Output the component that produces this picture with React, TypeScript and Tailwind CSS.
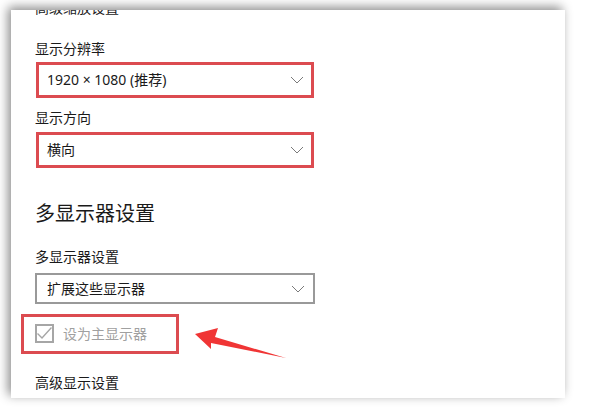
import React from 'react';

const font = { fontFamily: '"Noto Sans", "Noto Sans CJK SC", sans-serif' };

const Chevron = () => (
    <svg width="14" height="8" viewBox="0 0 14 8" fill="none" className="shrink-0">
        <path d="M1 1l6 6 6-6" stroke="#7a7a7a" strokeWidth="1" />
    </svg>
);

const Dropdown: React.FC<{ value: string; marked?: boolean }> = ({ value, marked }) => (
    <div
        className={
            marked
                ? 'ml-[1px] flex h-[36px] w-[278px] items-center justify-between border-[3px] border-[#dc4b50] pl-[8px] pr-[7px]'
                : 'flex h-[31px] w-[280px] items-center justify-between border-2 border-[#999999] pl-[10px] pr-[8px]'
        }
    >
        <span className="text-[14px] leading-none text-[#1a1a1a]">{value}</span>
        <Chevron />
    </div>
);

export default function App() {
    return (
        <div className="relative flex h-[411px] w-[591px] flex-col overflow-hidden bg-white" style={font}>
            <div className="ml-[11px] mt-[10px] flex h-[388px] w-[554px] flex-col items-start overflow-hidden bg-white pl-[24px] shadow-[-3px_-3px_10px_rgba(0,0,0,0.45)]">
                <div className="-mt-[11px] h-[18px] text-[14px] leading-[18px] text-[#1a1a1a]">高级缩放设置</div>

                <div className="mt-[22px] h-[20px] text-[14px] leading-[20px] text-[#1a1a1a]">显示分辨率</div>
                <div className="mt-[3px]">
                    <Dropdown value="1920 × 1080 (推荐)" marked />
                </div>

                <div className="mt-[10px] h-[20px] text-[14px] leading-[20px] text-[#1a1a1a]">显示方向</div>
                <div className="mt-[4px]">
                    <Dropdown value="横向" marked />
                </div>

                <div className="mt-[32px] h-[28px] text-[20px] leading-[28px] text-[#1a1a1a]">多显示器设置</div>

                <div className="mt-[19px] h-[20px] text-[14px] leading-[20px] text-[#1a1a1a]">多显示器设置</div>
                <div className="mt-[6px]">
                    <Dropdown value="扩展这些显示器" />
                </div>

                <div className="relative mt-[20px] flex h-[19px] items-center gap-[9px]">
                    <div className="flex h-[19px] w-[19px] items-center justify-center border-2 border-[#a6a6a6]">
                        <svg width="15" height="13" viewBox="0 0 15 13" fill="none">
                            <path d="M0.5 6.5l4.5 4.5L14.5 0.5" stroke="#a6a6a6" strokeWidth="1.4" />
                        </svg>
                    </div>
                    <span className="text-[14px] leading-none text-[#a0a0a0]">设为主显示器</span>
                    <div className="absolute -left-[14px] -top-[10px] h-[40px] w-[158px] border-[3px] border-[#dc4b50]" />
                </div>

                <div className="mt-[30px] h-[20px] text-[14px] leading-[20px] text-[#1a1a1a]">高级显示设置</div>
            </div>

            <svg className="absolute left-0 top-0" width="591" height="411" viewBox="0 0 591 411">
                <polygon points="195,334 218,328 215,337 286,358 211,343 211,349" fill="#f03535" />
            </svg>
        </div>
    );
}
